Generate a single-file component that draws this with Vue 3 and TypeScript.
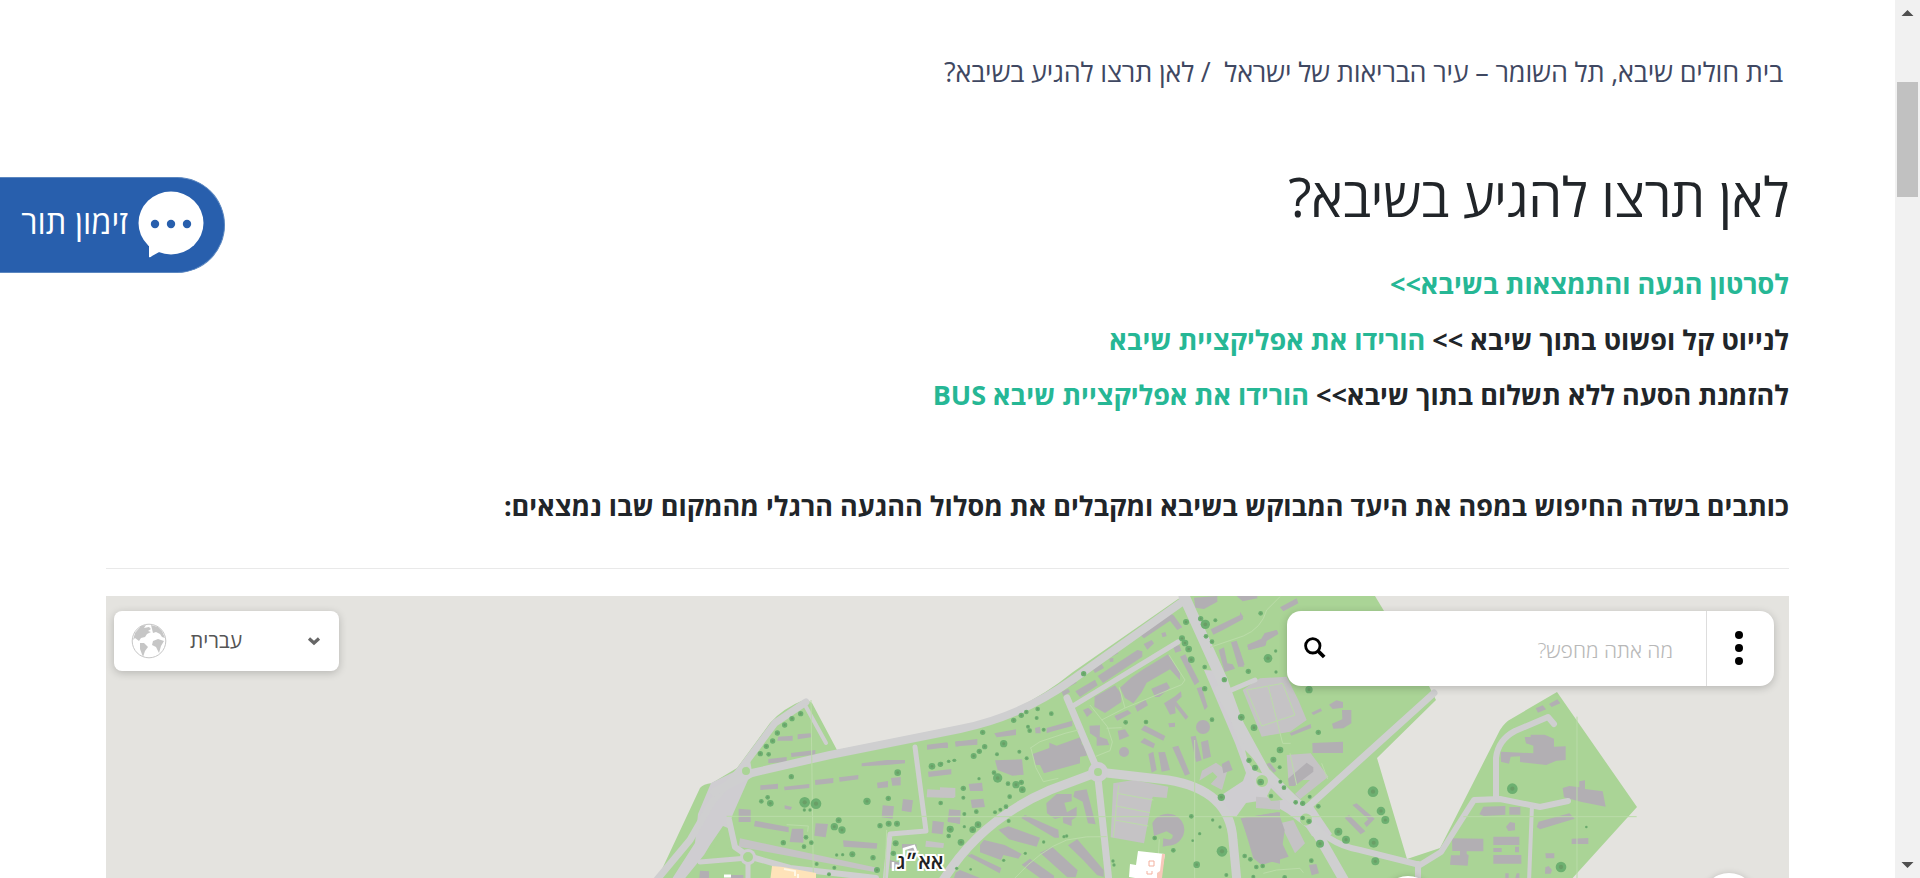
<script setup lang="ts">
interface Sector {
  id: string
  transform: string
  paving: string
  buildings: string
  paths: string
  trees: number[][]
}

// Each campus sector is surveyed on its own grid, three units to the pixel.
const sectors: Sector[] = [
  {
    id: 'west',
    transform: 'translate(640 680) scale(.33333)',
    paving: 'M862 328L945 332L942 354L860 352Z M300 475L718 565L716 578L296 500Z M858 482L912 490L910 504L856 500Z',
    buildings:
      'M415 170L458 167V182H412Z M473 163L512 160L513 172L473 178Z M385 237L440 231V246L385 250Z M453 219L526 210V224L454 231Z M361 316L414 311V326L361 330Z M432 320L508 312V324L434 331Z M525 300L580 294V309L526 315Z M597 292L655 285V298L599 305Z M665 250L740 240L795 240V250L740 255L665 259Z M861 194L922 187V202L861 209Z M945 185L960 182V198L947 200Z M864 275L934 267V283L866 291Z M753 294L782 291V316L757 317Z M711 308L744 303V322L713 325Z M296 386L332 389V426H296Z M345 422L446 441V457L342 439Z M456 446H490V488L449 486Z M527 430L564 432L557 472L523 467Z M609 481L712 490L710 506L611 500Z M728 376L762 379L758 416L725 412Z M789 357L819 361L814 397L785 392Z M878 422L912 427L908 463L875 459Z M930 390L960 393V432L922 424Z M434 376L456 381L452 390L434 386Z M786 492L829 493L832 515L805 519L802 507H786Z M750 540L785 550L780 568L750 565Z M180 572L207 574V594H178Z M270 585H310V594H270Z',
    paths: 'M513 60L520 594 M260 409H960 M440 434L505 438L503 455 M740 450L735 594',
    trees: [[482,101,8],[456,116,8],[434,135,8],[412,159,8],[398,183,8],[379,199,8],[361,221,8],[386,223,7],[454,290,8],[364,364,7],[383,352,7],[391,370,10],[494,367,16],[528,371,16],[493,390,5],[510,390,5],[430,488,8],[498,472,7],[514,488,7],[492,500,7],[596,421,9],[583,440,11],[606,450,11],[681,364,11],[745,355,8],[720,437,8],[746,431,9],[771,431,9],[773,278,10],[876,259,10],[901,253,8],[926,244,5],[944,241,5],[902,369,7],[930,447,10],[926,467,5],[590,525,5],[608,524,5],[637,523,9],[699,533,8],[767,490,9],[760,520,8],[711,570,9],[530,552,6],[583,563,6],[567,583,6]],
  },
  {
    id: 'centre',
    transform: 'translate(940 590) scale(.33333)',
    paving:
      'M520 580L580 570L685 590L680 624L638 620L612 760L512 742Z M786 542L828 518L862 542L846 600L812 582L832 560L818 546L778 572Z M0 592L46 594V622H0Z M948 620L1000 624L1020 632V660L948 654Z',
    buildings:
      'M597 132L672 85L685 70L700 75L727 112L712 120L690 92L612 145Z M762 23L832 18V35L792 57L766 53Z M890 18H952V25L908 34Z M455 232L485 222L492 234L465 249Z M473 258L592 180L607 184V200L489 279Z M406 304L465 269L473 286L420 321Z M611 162L635 150L642 160L622 179Z M540 293L575 262L610 238L684 193L720 250V271L690 238L620 278L605 307L580 340L555 324Z M634 296L680 277L690 293L658 321L645 321Z M464 320L525 286L544 312V336L495 369L463 350Z M585 349L616 329L624 346L592 365Z M523 378L563 360L574 370L532 392Z M429 360L445 353L458 366L441 381Z M448 407L480 406L479 440L501 448L508 465L470 467V443L450 430Z M533 422L555 418L568 438L538 450Z M672 340L705 319L723 304L725 320L709 335L745 380L737 389L705 348L707 370L690 374Z M720 200L736 193L778 275L764 286Z M770 295L785 290L803 350L794 360Z M812 118L902 74L910 87L849 120L820 134Z M836 180L852 172L862 220L878 223L885 236L854 246Z M873 157L890 152L914 224L895 231Z M922 169L970 148L978 131L1010 120L1015 132L980 153L977 166L930 180Z M601 457L613 444L645 461L640 475Z M603 419L614 406L676 438L670 452Z M625 492L640 485L650 540L635 548Z M655 487L675 486L690 540L665 545Z M697 472L715 467L750 551L735 557Z M752 440L767 437L785 511L768 516Z M783 456L804 450L813 500L790 508Z M845 522L867 511L878 540L850 550Z M278 492L328 474V458L350 467L425 440V462L440 475L440 497L420 500L420 520L312 550L300 525H287Z M165 511L246 508L251 554L217 557L173 540Z M163 430L228 418V435L170 442Z M46 455L112 447V464L50 469Z M0 460H24V474H0Z M86 582L126 578L129 603H90Z M92 629L130 626L135 651L96 654Z M27 658L62 661L60 701L24 696Z M320 430L320 414L397 392V408L333 425Z M285 414L300 410L302 430H287Z M319 640L350 612H395V634L373 638L381 667L410 650V680L395 690V708L370 699L368 680L345 687L321 670Z M404 604L440 598L467 703L444 700L428 635L400 620Z M244 684L255 675L355 719L357 743L344 743Z M175 719L205 709L300 743L290 770L207 748Z M120 765L132 750L194 765L245 792L235 806L190 795L183 810L120 787Z M82 797L95 792L184 834L179 850Z M47 848L60 840L120 864H42Z M384 766L412 748L491 840V861L471 855L430 811Z M300 788L336 770L413 841L407 862H382Z M245 824L270 806L342 857V864H300Z M902 685L1020 667V821L945 803Z M637 700A50 48 0 1 1 682 767L668 770L670 745Q700 755 698 735L680 724L642 738Z M505 190L530 180L535 190L512 202Z M508 206L520 203V215L510 216Z M385 280L405 270L410 278L388 290Z M664 130L676 126L680 138L668 142Z M685 400L705 398V410L688 412Z M365 305L385 296L390 306L370 318Z M700 172L718 165L724 182L706 188Z',
    paths:
      'M270 475L300 455L375 430L415 420 M273 475L287 532L310 575L355 565 M465 500L510 482L517 456L502 410L450 345 M485 390L555 354L538 292 M555 354L725 284L735 270L687 195 M500 415L545 413 M536 586L530 640L520 742 M532 610L640 630 M528 648L630 668 M524 690L625 708 M1020 20L980 60Q965 115 910 138L810 172 M225 864Q300 780 380 750Q440 736 500 740 M0 680H1020 M764 450V864 M658 748L651 864',
    trees: [[738,96,9],[782,86,8],[796,103,14],[798,139,7],[826,91,6],[816,155,7],[726,145,9],[735,159,10],[746,177,10],[754,209,10],[794,231,7],[794,296,8],[853,269,8],[962,70,7],[925,244,8],[984,205,13],[431,251,8],[293,357,7],[259,366,7],[244,376,8],[221,391,8],[290,384,6],[334,371,7],[264,410,6],[269,422,7],[311,419,6],[128,427,8],[191,461,11],[134,470,8],[118,484,8],[101,498,9],[171,493,6],[238,485,6],[260,505,6],[42,511,5],[26,514,5],[3,522,7],[162,548,7],[173,564,14],[204,581,7],[228,584,11],[244,577,8],[247,599,10],[117,566,5],[70,595,8],[70,623,6],[209,620,7],[198,650,7],[181,659,6],[165,667,6],[109,665,7],[73,672,6],[114,704,10],[98,719,10],[31,718,10],[73,710,5],[26,738,7],[63,757,10],[206,693,6],[311,756,5],[256,790,5],[191,811,5],[92,838,4],[50,835,5],[557,397,7],[618,396,7],[816,389,7],[904,382,10],[942,413,10],[844,622,11],[754,679,7],[818,690,5],[840,711,5],[779,731,5],[758,752,4],[700,781,7],[644,744,7],[770,824,10],[846,784,16],[859,855,6],[914,798,7],[931,808,7],[949,831,7],[968,828,7],[940,860,6],[519,813,5],[522,825,5],[372,740,5],[380,738,5]],
  },
  {
    id: 'east',
    transform: 'translate(1240 590) scale(.33333)',
    paving: 'M8 300L60 265L140 260L175 330L200 390L150 425L65 440Z M140 495L212 490L265 560L180 628L165 612L210 570L145 570Z M120 700L160 690L195 760L165 790Z',
    buildings:
      'M267 344L289 331L309 336V353L278 357Z M306 360H334V400L310 415L280 416L276 401L307 388Z M214 368L242 355L246 363L220 375Z M149 430L212 402L214 414L154 437Z M217 459L309 455V489H218Z M144 566L200 518L220 532V545L164 588H147Z M314 684L327 675L376 724L362 733Z M337 645L350 640L404 686L380 711L372 700L385 688Z M5 685L115 666L121 683L134 720L128 763L146 800L65 825L40 805Z M207 825L229 822L237 850L215 856Z M78 522L90 518L109 542L101 548Z M0 65L10 80L0 92Z M120 52L170 25L175 40L130 64Z M22 164L64 146L74 129L110 120L115 130L77 151L75 168L25 180Z M0 186L12 230H0Z',
    paths: 'M20 300L65 408L165 375L128 280L20 300 M85 290L128 460H152 M150 490L170 585 M245 520L263 567 M70 850L110 840L180 835L190 848 M0 680H430',
    trees: [[207,299,11],[235,427,8],[120,480,10],[100,509,9],[119,532,6],[27,511,8],[45,533,9],[62,576,10],[93,618,7],[121,575,6],[132,593,7],[209,620,6],[167,637,7],[188,640,8],[235,649,7],[188,684,7],[207,694,8],[399,605,16],[423,663,13],[436,690,12],[401,758,15],[406,814,12],[295,725,12],[318,749,12],[240,761,12],[214,812,7],[134,862,7],[107,183,5],[108,246,5]],
  },
  {
    id: 'far-east',
    transform: 'translate(1400 590) scale(.33333)',
    paving: '',
    buildings:
      'M407 355L428 346L438 358L414 368Z M447 342L472 328L481 340L455 351Z M374 441H392V434H434L462 446V470L497 469V510L469 512L439 525L360 516V499L332 500L327 521L303 515L302 485L400 490V467L378 460Z M488 594L508 588L538 592V574L555 571V597L608 604L617 650L545 636L492 622Z M238 673L250 650L316 648V674L252 678Z M328 651H361V674H328Z M410 711L416 695L508 670L524 686L420 718Z M318 710L330 696L345 699V721L325 723Z M156 745L250 746V784H200V792L206 796L203 827L150 824L153 796H180V783H157Z M280 740H358V765H280Z M280 774H305V786H280Z M345 770H357V787H345Z M280 795L364 795V821H280Z M515 746L565 744V762H515Z M436 790H463V805H438Z M436 832L446 828L456 840L452 851H435Z M316 850H326V864H316Z M350 850H358V864H346Z',
    paths: 'M531 380V864 M190 680H710',
    trees: [[337,596,16],[483,831,16],[559,711,4]],
  },
]

const mainRoads = [
  { d: 'M655 882L690 840L712 802L740 770L775 723L806 702', w: 7 },
  { d: 'M714 792L752 773L830 755L960 729Q1020 717 1072 680L1182 602', w: 8 },
  { d: 'M1184 596L1222 680L1260 785', w: 11 },
  { d: 'M1220 690L1265 772L1305 812L1345 882', w: 10 },
  { d: 'M942 882Q980 820 1050 790L1098 772L1168 780Q1230 790 1233 840L1237 882', w: 9 },
  { d: 'M1067 698L1097 769L1109 882', w: 7 },
  { d: 'M1073 706L1178 642', w: 5 },
  { d: 'M1229 691L1255 680', w: 5 },
  { d: 'M1434 693L1309 806', w: 7 },
  { d: 'M1303 812Q1325 844 1360 850L1420 865L1441 852L1474 800L1500 799L1540 807L1568 801', w: 6 },
  { d: 'M1496 799V758Q1498 740 1515 731L1548 717L1554 724', w: 6 },
  { d: 'M1532 805L1529 882', w: 4 },
  { d: 'M1418 864V882', w: 6 },
  { d: 'M805 705L826 743', w: 4 },
  { d: 'M915 747L926 831L890 834L885 882', w: 5 },
  { d: 'M729 820L735 847L748 856L790 868L876 878', w: 6 },
  { d: 'M748 858L700 862', w: 5 },
  { d: 'M748 858V882', w: 5 },
  { d: 'M750 772L748 760', w: 4 },
]
const links = [
  { text: 'לסרטון הגעה והתמצאות בשיבא>>', lead: '' },
  { text: 'הורידו את אפליקציית שיבא', lead: 'לנייוט קל ופשוט בתוך שיבא >> ' },
  { text: 'הורידו את אפליקציית שיבא BUS', lead: 'להזמנת הסעה ללא תשלום בתוך שיבא>> ' },
]
</script>

<template>
  <div class="page" dir="rtl">
    <main class="content">
      <nav class="crumbs"><a>בית חולים שיבא, תל השומר – עיר הבריאות של ישראל</a>&nbsp; / <span>לאן תרצו להגיע בשיבא?</span></nav>
      <h1>לאן תרצו להגיע בשיבא?</h1>
      <p v-for="l in links" :key="l.text" class="line">{{ l.lead }}<a>{{ l.text }}</a></p>
      <p class="line intro">כותבים בשדה החיפוש במפה את היעד המבוקש בשיבא ומקבלים את מסלול ההגעה הרגלי מהמקום שבו נמצאים:</p>
      <hr />
      <section class="map">
        <svg class="terrain" viewBox="106 596 1683 282" width="1683" height="282">
          <rect x="106" y="596" width="1683" height="282" fill="#e4e3df" />
          <path class="land" d="M656 882L700 788Q703 784 712 783L737 768L770 723Q783 708 806 699L812 703L837 750L960 727Q1020 715 1073 672L1178 599L1184 596H1375L1429 686L1436 700L1377 758L1407 859L1440 848L1500 730Q1505 722 1511 719L1557 692L1637 807L1569 882Z" />
          <path d="M711 783L742 768L756 772L748 780L733 814L728 828L723 826L710 845L704 855L682 882H670L695 843L698 814Z" fill="#cfcdd1" />
          <path d="M1204 670L1222 671L1245 735L1268 772L1310 808L1318 825L1310 830L1287 813L1265 800L1246 803L1236 817L1224 814L1214 800L1243 781L1246 773L1235 743Z" fill="#cfcdd1" />
          <path d="M1292 806L1311 803L1332 834L1324 840L1312 836Z" fill="#cfcdd1" />
          <g v-for="s in sectors" :key="s.id" :transform="s.transform">
            <path :d="s.paving" fill="#c5c3c5" />
            <path :d="s.buildings" fill="#b2afb3" />
          </g>
          <path v-for="r in mainRoads" :key="r.d" class="road" :d="r.d" :stroke-width="r.w" />
          <circle cx="1098" cy="772" r="10" fill="#cfcdd1" />
          <circle cx="748" cy="857" r="8" fill="#cfcdd1" />
          <path class="land" d="M1245 750Q1256 760 1262 773Q1256 774 1248 762Z M1256 781A6 6 0 1 1 1268 781A6 6 0 1 1 1256 781 M1094 772A4 4 0 1 1 1102 772A4 4 0 1 1 1094 772 M743 857A5 5 0 1 1 753 857A5 5 0 1 1 743 857 M742 771A4 4 0 1 1 750 771A4 4 0 1 1 742 771 M722 829L728 847L735 855L710 857Z M1267 796L1271 788L1283 800L1271 801Z M1300 819A6 6 0 1 1 1312 820A6 6 0 1 1 1300 819" />
          <circle cx="1203" cy="727" r="7" fill="#b2afb3" />
          <circle cx="1124" cy="752" r="5" fill="#b2afb3" />
          <g v-for="s in sectors" :key="s.id + '-detail'" :transform="s.transform">
            <path class="trail" :d="s.paths" />
            <g v-for="(t, i) in s.trees" :key="i">
              <circle :cx="t[0]" :cy="t[1]" :r="t[2]" fill="#6db071" />
              <circle :cx="t[0]" :cy="t[1]" :r="t[2] * 0.4" fill="#6a9e66" />
            </g>
          </g>
          <path d="M772 866L783 867L816 873V882H770Z" fill="#fee3b9" />
          <path d="M784 869L795 871V876M798 874V880" fill="none" stroke="#fff7e5" stroke-width="2" />
          <path d="M1138 851L1165 854L1160 882L1129 877L1130 864L1136 865Z" fill="#fff" />
          <path d="M1162 854H1165L1162 878H1157L1157 873L1160 871Z" fill="#f8c8ba" />
          <path d="M1149 861H1154V866H1149ZM1147 871V874H1152V871" fill="none" stroke="#f3b09e" />
          <path d="M904 868V849L914 846L916 851M893 862V871" fill="none" stroke="#fff" stroke-width="2.500" />
          <text class="place" x="920" y="869" text-anchor="middle">אא״ג</text>
          <path d="M724 876H731" stroke="#fff" stroke-width="3" />
        </svg>
        <div class="lang">
          <svg class="globe" viewBox="0 0 36 36" width="36" height="38">
            <circle cx="18" cy="18" r="16.8" fill="#fff" stroke="#c6c6c6" />
            <path d="M4 10L10 3L15 2L13 5L18 4L20 6L17 8L20 9L16 11L14 14L10 15L8 18L4 15L2 17Z M20 2L27 4L31 8L34 15L31 14L29 11L25 9L22 10L21 6Z M9 20L13 20L17 24L14 28L12 34L9 26Z M22 18L27 16L33 18L30 23L28 30L25 24L21 22Z" fill="#c6c6c6" />
          </svg>
          <span>עברית</span>
          <svg class="chev" viewBox="0 0 14 10" width="14" height="10"><path d="M2 2.5L7 7L12 2.5" fill="none" stroke="#666" stroke-width="3.2" /></svg>
        </div>
        <div class="search">
          <div class="more"><i></i><i></i><i></i></div>
          <span class="hint">מה אתה מחפש?</span>
          <svg viewBox="0 0 22 22" width="22" height="22"><circle cx="8.8" cy="8.8" r="7.2" fill="none" stroke="#000" stroke-width="2.8" /><path d="M13.7 13.7L20.2 20" stroke="#000" stroke-width="3.8" /></svg>
        </div>
        <i class="fab fab-end"></i>
        <i class="fab fab-mid"></i>
      </section>
    </main>
    <div class="scroll">
      <svg viewBox="0 0 25 878" width="25" height="878">
        <rect width="25" height="878" fill="#f1f1f1" /><rect x="2" y="82" width="21" height="115" fill="#c1c1c1" />
        <path d="M6.500 16L12.500 10L18.500 16Z M6.500 862L12.500 868L18.500 862Z" fill="#505050" />
      </svg>
    </div>
    <div class="booking">
      <span>זימון תור</span>
      <svg viewBox="0 0 66 68" width="66" height="68"><ellipse cx="33" cy="32" rx="32.500" ry="31.500" fill="#fff" /><path d="M11 50V66Q12 67 14 65L23 60Z" fill="#fff" /><g fill="#285fad"><circle cx="17" cy="33" r="4.200" /><circle cx="33" cy="33" r="4.200" /><circle cx="49" cy="33" r="4.200" /></g></svg>
    </div>
  </div>
</template>

<style>
body { margin: 0; overflow: hidden; background: #fff; }
</style>
<style scoped>
.page { position: relative; height: 878px; overflow: hidden; background: #fff; color: #212529; font-family: "Open Sans", "Noto Sans", sans-serif; }
.content { margin: 0 131px 0 106px; }
.crumbs { height: 40px; margin: 0; padding: 52px 6px 0 0; line-height: 39px; font-size: 27px; font-weight: 400; letter-spacing: -0.185px; color: #3f4862; white-space: nowrap; }
h1 { margin: 62px 0 0; height: 84px; line-height: 84px; font-size: 54px; font-weight: 400; letter-spacing: -0.34px; white-space: nowrap; }
.line { margin: 0; padding-top: 0; height: 55.5px; line-height: 55.500px; font-size: 27px; font-weight: 700; white-space: nowrap; }
h1 + .line { margin-top: 18px; }
.line a { color: #26b795; }
.intro { margin-top: 55.500px; line-height: 56px; }
hr { margin: 34px 0 27px; border: 0; border-top: 1px solid #e9e9e9; }
.map { position: relative; height: 282px; overflow: hidden; background: #e4e3df; }
.terrain { display: block; }
.land { fill: #aad496; }
.road { fill: none; stroke: #cfcfd0; stroke-linejoin: round; stroke-linecap: round; }
.trail { fill: none; stroke: #bbdca9; stroke-width: 3; }
.place { font: 600 20.5px "Open Sans", sans-serif; fill: #222; stroke: #fff; stroke-width: 4px; paint-order: stroke; }
.lang, .search { position: absolute; top: 15px; display: flex; align-items: center; background: #fff; box-shadow: 0 2px 8px #0003; }
.lang { direction: ltr; left: 8px; width: 225px; height: 60px; border-radius: 8px; box-sizing: border-box; padding: 0 18px 0 17px; color: #555; font-size: 21px; font-weight: 400; }
.lang span { margin-left: 23px; margin-top: -2px; }
.chev { margin-left: auto; }
.search { right: 15px; width: 487px; height: 75px; border-radius: 14px; }
.more { width: 68px; height: 75px; box-sizing: border-box; padding-left: 3px; border-left: 1px solid #ddd; display: flex; flex-direction: column; justify-content: center; align-items: center; gap: 5px; }
.more i { width: 8px; height: 8px; border-radius: 50%; background: #000; position: relative; left: -3px; }
.hint { margin: 3px 33px 0 auto; color: #b8b8b8; font-size: 21px; font-weight: 300; }
.search svg { margin-left: 17px; }
.fab { position: absolute; width: 54px; height: 54px; border-radius: 50%; background: #fff; box-shadow: 0 1px 7px #0003; }
.fab-end { left: 1596px; top: 277px; }
.fab-mid { left: 1275px; top: 280px; }
.scroll { position: absolute; right: 0; top: 0; width: 25px; height: 878px; }
.scroll svg { display: block; }
.booking { position: absolute; left: 0; top: 177px; width: 225px; height: 96px; box-sizing: border-box; border: 1px solid #5b87c0; border-left: 0; border-radius: 0 48px 48px 0; background: #285fad; direction: ltr; display: flex; align-items: center; color: #fff; font-size: 32.600px; }
.booking span { width: 107px; margin: -8px 10px 0 21px; direction: rtl; white-space: nowrap; }
</style>
